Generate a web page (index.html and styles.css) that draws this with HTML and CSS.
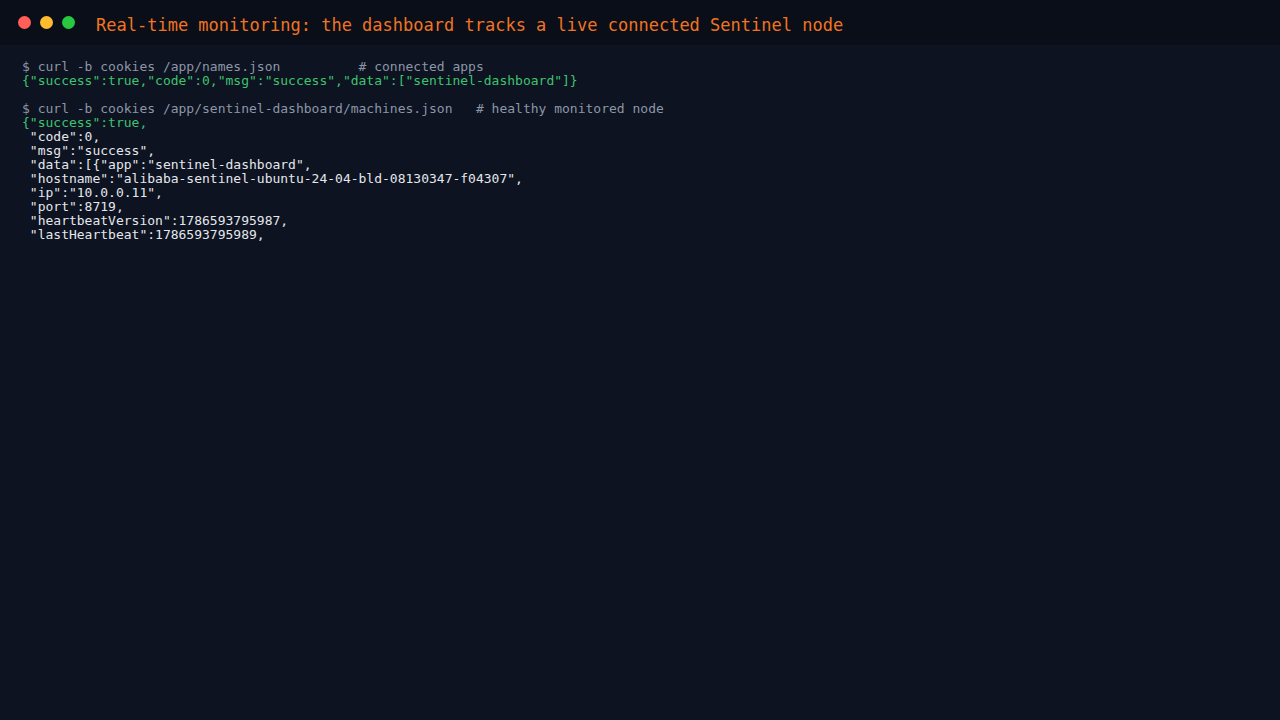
FILE: index.html
```html
<!DOCTYPE html>
<html lang="en">
<head>
<meta charset="utf-8">
<title>Sentinel monitoring</title>
<link rel="stylesheet" href="styles.css">
</head>
<body>
<header class="titlebar">
  <div class="dots">
    <span class="dot red"></span>
    <span class="dot yellow"></span>
    <span class="dot green"></span>
  </div>
  <h1 class="title">Real-time monitoring: the dashboard tracks a live connected Sentinel node</h1>
</header>
<main class="terminal">
<pre class="out"><span class="cmd">$ curl -b cookies /app/names.json          # connected apps</span>
<span class="ok">{"success":true,"code":0,"msg":"success","data":["sentinel-dashboard"]}</span>

<span class="cmd">$ curl -b cookies /app/sentinel-dashboard/machines.json   # healthy monitored node</span>
<span class="ok">{"success":true,</span>
<span class="plain"> "code":0,
 "msg":"success",
 "data":[{"app":"sentinel-dashboard",
 "hostname":"alibaba-sentinel-ubuntu-24-04-bld-08130347-f04307",
 "ip":"10.0.0.11",
 "port":8719,
 "heartbeatVersion":1786593795987,
 "lastHeartbeat":1786593795989,</span></pre>
</main>
</body>
</html>
```

FILE: styles.css
```css
html, body {
  margin: 0;
  padding: 0;
  height: 100%;
}
body {
  background: #0d1320;
  font-family: "DejaVu Sans Mono", "Liberation Mono", monospace;
}
.titlebar {
  height: 45px;
  background: #0a0e18;
  display: flex;
  align-items: center;
  padding: 0 0 0 18px;
  box-sizing: border-box;
}
.dots {
  display: flex;
  gap: 9px;
  margin-top: -1px;
}
.dot {
  width: 13px;
  height: 13px;
  border-radius: 50%;
  display: block;
}
.red { background: #ff5f57; }
.yellow { background: #febc2e; }
.green { background: #28c840; }
.title {
  margin: 6px 0 0 21px;
  font-size: 17px;
  font-weight: normal;
  color: #f07422;
  line-height: 1;
}
.terminal {
  padding: 15px 22px;
}
.out {
  margin: 0;
  font-family: "DejaVu Sans Mono", "Liberation Mono", monospace;
  font-size: 13px;
  line-height: 14px;
  color: #e4e7ec;
}
.cmd { color: #8c96a8; }
.ok { color: #3ec46f; }
.plain { color: #e4e7ec; }
```
